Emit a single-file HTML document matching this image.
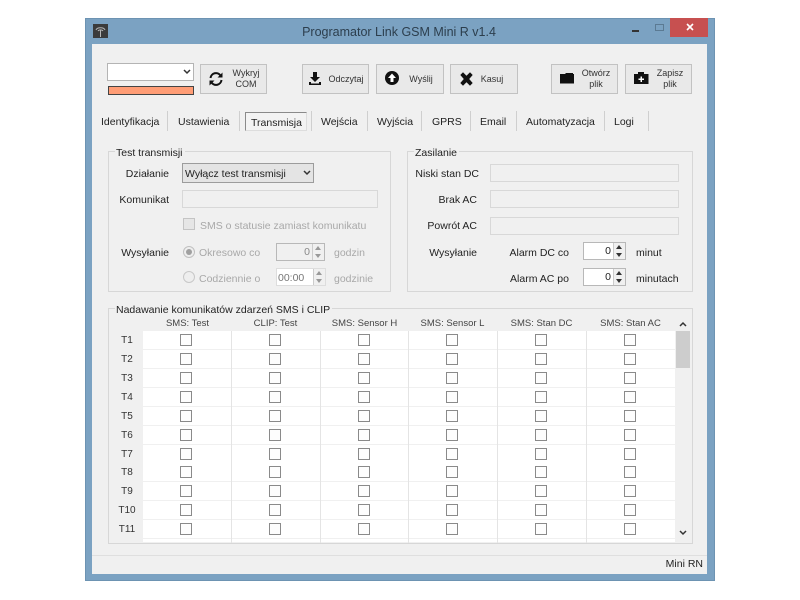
<!DOCTYPE html>
<html lang="pl"><head><meta charset="utf-8"><title>Programator Link GSM Mini R v1.4</title>
<style>
*{box-sizing:border-box}
html,body{margin:0;padding:0;background:#fff;width:800px;height:600px;overflow:hidden}
body{font-family:"Liberation Sans",sans-serif;font-size:10.5px;color:#222;position:relative}
.a,.t,.b,.f,.s,.c,.h,.v,.g{position:absolute}
#w{position:absolute;left:85px;top:18px;width:630px;height:563px;background:#7ba2c2;border:1px solid #6d93b2}
#in{position:absolute;left:92px;top:44px;width:615px;height:530px;background:#f0f0f0}
.t{white-space:nowrap;line-height:13px;margin-top:1px}
.r{text-align:right}.d{color:#a8a8a8}
.b{background:#e9e9e9;border:1px solid #c2c2c2;text-align:center;line-height:11px;font-size:9px;color:#333}
.b span{position:absolute;white-space:nowrap;text-align:center}
.f{background:#f0f0f0;border:1px solid #d8d8d8;height:28px}
.tab{position:absolute;top:111px;width:1px;height:20px;background:#cfcfcf}
.g{border:1px solid #d7d7d7}
.gl{position:absolute;background:#f0f0f0;padding:0 2px 0 1px;line-height:13px;color:#222;white-space:nowrap;margin-top:1px}
.s{background:#fff;border:1px solid #b8b8b8;height:18px}
.sd{background:#f0f0f0}
.ar{position:absolute;right:0;top:0;width:12px;height:100%;border-left:1px solid #ccc;background:#f0f0f0}
.ar:before,.ar:after{content:"";position:absolute;left:2px;border:3px solid transparent}
.ar:before{top:-1px;border-bottom:4px solid #333}
.ar:after{bottom:-1px;border-top:4px solid #333}
.dis:before{border-bottom-color:#999}.dis:after{border-top-color:#999}
.hd{position:absolute;top:318px;width:89px;text-align:center;font-size:9.5px;color:#444;line-height:12px;white-space:nowrap}
.row{position:absolute;left:143px;width:532px;height:18px;background:#fff}
.row i{position:absolute;top:3px;width:12px;height:12px;background:#fdfdfd;border:1px solid #8a8a8a}
.row i:nth-child(1){left:37px}.row i:nth-child(2){left:126px}.row i:nth-child(3){left:215px}.row i:nth-child(4){left:303px}.row i:nth-child(5){left:392px}.row i:nth-child(6){left:481px}
.v{top:331px;width:1px;height:212px;background:#e4e4e4}
.rl{position:absolute;left:111px;width:32px;text-align:center;font-size:10px;color:#333;line-height:12px;margin-top:1px}
</style></head><body>
<div id="w"></div>
<div id="in"></div>

<!-- title bar -->
<div class="a" style="left:93px;top:24px;width:15px;height:14px;background:#3b3b3b"></div>
<svg class="a" style="left:93px;top:24px" width="15" height="14" viewBox="0 0 15 14"><path d="M7.500 13V6M3 6C4 3 11 3 12 6M5 7c1-1.500 4-1.500 5 0" stroke="#b5b5b5" fill="none"/></svg>
<div class="t" style="left:199px;top:23px;width:400px;text-align:center;font-size:12.500px;line-height:16px;color:#2c3e4d">Programator Link GSM Mini R v1.4</div>
<div class="a" style="left:632px;top:30px;width:7px;height:2px;background:#333"></div>
<div class="a" style="left:655px;top:24px;width:9px;height:7px;border:1px solid #5b7a93"></div>
<div class="a" style="left:670px;top:18px;width:38px;height:19px;background:#c75050"></div>
<svg class="a" style="left:686px;top:23px" width="8" height="8" viewBox="0 0 8 8"><path d="M1 1L7 7M7 1L1 7" stroke="#fff" stroke-width="1.600"/></svg>

<!-- COM combobox -->
<div class="a" style="left:107px;top:63px;width:87px;height:18px;background:#fff;border:1px solid #b4b4b4"></div>
<svg class="a" style="left:183px;top:69px" width="8" height="6" viewBox="0 0 8 6"><path d="M1 1L4 4L7 1" stroke="#333" stroke-width="1.500" fill="none"/></svg>
<div class="a" style="left:108px;top:86px;width:86px;height:9px;background:#ff9d76;border:1px solid #444"></div>

<!-- buttons -->
<div class="b" style="left:200px;top:64px;width:67px;height:30px"><span style="left:27px;top:3px;width:36px">Wykryj</span><span style="left:27px;top:14px;width:36px">COM</span></div>
<svg class="a" style="left:208px;top:71px" width="16" height="16" viewBox="0 0 16 16"><path d="M2.500 7A5.500 5.500 0 0 1 12.500 4.500M13.500 9A5.500 5.500 0 0 1 3.500 11.500" stroke="#111" stroke-width="2" fill="none"/><path d="M14.500 1.500V6.500H9.500ZM1.500 14.500V9.500H6.500Z" fill="#111"/></svg>

<div class="b" style="left:302px;top:64px;width:67px;height:30px"><span style="left:21px;top:9px;width:44px">Odczytaj</span></div>
<svg class="a" style="left:308px;top:71px" width="14" height="14" viewBox="0 0 14 14"><path d="M5 1H9V6H12L7 11L2 6H5ZM1 11H3V12.500H11V11H13V14H1Z" fill="#111"/></svg>

<div class="b" style="left:376px;top:64px;width:68px;height:30px"><span style="left:29px;top:9px;width:30px">Wyślij</span></div>
<svg class="a" style="left:385px;top:71px" width="14" height="14" viewBox="0 0 14 14"><circle cx="7" cy="7" r="7" fill="#111"/><path d="M7 2.500L11 7H8.500V11H5.500V7H3Z" fill="#fff"/></svg>

<div class="b" style="left:450px;top:64px;width:68px;height:30px"><span style="left:26px;top:9px;width:30px">Kasuj</span></div>
<svg class="a" style="left:459px;top:72px" width="15" height="14" viewBox="0 0 15 14"><path d="M2 3L4 1L7.500 4.500L11 1L13 3L9.500 7L13 11L11 13L7.500 9.500L4 13L2 11L5.500 7Z" fill="#111" stroke="#111"/></svg>

<div class="b" style="left:551px;top:64px;width:67px;height:30px"><span style="left:26px;top:3px;width:36px">Otwórz</span><span style="left:26px;top:14px;width:36px">plik</span></div>
<svg class="a" style="left:560px;top:72px" width="14" height="12" viewBox="0 0 14 12"><path d="M0 2H5L6 1H13V2H14V11.500H0Z" fill="#111"/></svg>

<div class="b" style="left:625px;top:64px;width:67px;height:30px"><span style="left:26px;top:3px;width:36px">Zapisz</span><span style="left:26px;top:14px;width:36px">plik</span></div>
<svg class="a" style="left:634px;top:71px" width="15" height="13" viewBox="0 0 15 13"><path d="M0 3H4V1H10V3H14.500V13H0Z" fill="#111"/><path d="M6.500 5.500H8V7.500H10V9H8V11H6.500V9H4.500V7.500H6.500Z" fill="#fff"/></svg>

<!-- tabs -->
<div class="t" style="left:101px;top:115px">Identyfikacja</div>
<div class="tab" style="left:167px"></div>
<div class="t" style="left:178px;top:115px">Ustawienia</div>
<div class="tab" style="left:239px"></div>
<div class="a" style="left:245px;top:112px;width:62px;height:19px;background:#f3f3f3;border:1px solid #8a8a8a;border-right-color:#ddd;border-bottom-color:#ddd"></div>
<div class="t" style="left:251px;top:116px">Transmisja</div>
<div class="tab" style="left:311px"></div>
<div class="t" style="left:321px;top:115px">Wejścia</div>
<div class="tab" style="left:367px"></div>
<div class="t" style="left:377px;top:115px">Wyjścia</div>
<div class="tab" style="left:421px"></div>
<div class="t" style="left:432px;top:115px">GPRS</div>
<div class="tab" style="left:470px"></div>
<div class="t" style="left:480px;top:115px">Email</div>
<div class="tab" style="left:516px"></div>
<div class="t" style="left:526px;top:115px">Automatyzacja</div>
<div class="tab" style="left:604px"></div>
<div class="t" style="left:614px;top:115px">Logi</div>
<div class="tab" style="left:648px"></div>

<!-- Test transmisji -->
<div class="g" style="left:108px;top:151px;width:283px;height:141px"></div>
<div class="gl" style="left:115px;top:146px">Test transmisji</div>
<div class="t r" style="left:110px;top:167px;width:59px">Działanie</div>
<div class="a" style="left:182px;top:163px;width:132px;height:20px;background:#e4e4e4;border:1px solid #9c9c9c"></div>
<div class="t" style="left:185px;top:167px">Wyłącz test transmisji</div>
<svg class="a" style="left:303px;top:170px" width="8" height="6" viewBox="0 0 8 6"><path d="M1 1L4 4L7 1" stroke="#333" stroke-width="1.500" fill="none"/></svg>
<div class="t r" style="left:110px;top:193px;width:59px">Komunikat</div>
<div class="f" style="left:182px;top:190px;width:196px;height:18px"></div>
<div class="a" style="left:183px;top:218px;width:12px;height:12px;background:#e6e6e6;border:1px solid #c4c4c4"></div>
<div class="t d" style="left:200px;top:219px">SMS o statusie zamiast komunikatu</div>
<div class="t r" style="left:110px;top:246px;width:59px">Wysyłanie</div>
<div class="a" style="left:183px;top:246px;width:12px;height:12px;border-radius:50%;background:#eee;border:1px solid #c0c0c0"></div>
<div class="a" style="left:186px;top:249px;width:6px;height:6px;border-radius:50%;background:#a0a0a0"></div>
<div class="t d" style="left:199px;top:246px">Okresowo co</div>
<div class="s sd" style="left:276px;top:243px;width:49px"><div class="ar dis"></div></div>
<div class="t r" style="left:276px;top:245px;width:34px;color:#888">0</div>
<div class="t d" style="left:334px;top:246px">godzin</div>
<div class="a" style="left:183px;top:271px;width:12px;height:12px;border-radius:50%;background:#eee;border:1px solid #c8c8c8"></div>
<div class="t d" style="left:199px;top:272px">Codziennie o</div>
<div class="s" style="left:276px;top:268px;width:50px;border-color:#ddd"><div class="ar dis"></div></div>
<div class="t" style="left:278px;top:271px;color:#777">00:00</div>
<div class="t d" style="left:334px;top:272px">godzinie</div>

<!-- Zasilanie -->
<div class="g" style="left:407px;top:151px;width:286px;height:141px"></div>
<div class="gl" style="left:414px;top:146px">Zasilanie</div>
<div class="t r" style="left:409px;top:167px;width:70px">Niski stan DC</div>
<div class="f" style="left:490px;top:164px;width:189px;height:18px"></div>
<div class="t r" style="left:409px;top:193px;width:68px">Brak AC</div>
<div class="f" style="left:490px;top:190px;width:189px;height:18px"></div>
<div class="t r" style="left:409px;top:219px;width:68px">Powrót AC</div>
<div class="f" style="left:490px;top:217px;width:189px;height:18px"></div>
<div class="t r" style="left:409px;top:246px;width:68px">Wysyłanie</div>
<div class="t r" style="left:490px;top:246px;width:79px">Alarm DC co</div>
<div class="s" style="left:583px;top:242px;width:43px"><div class="ar"></div></div>
<div class="t r" style="left:583px;top:244px;width:28px">0</div>
<div class="t" style="left:636px;top:246px">minut</div>
<div class="t r" style="left:490px;top:272px;width:79px">Alarm AC po</div>
<div class="s" style="left:583px;top:268px;width:43px"><div class="ar"></div></div>
<div class="t r" style="left:583px;top:270px;width:28px">0</div>
<div class="t" style="left:636px;top:272px">minutach</div>

<!-- grid -->
<div class="g" style="left:108px;top:308px;width:585px;height:236px"></div>
<div class="gl" style="left:115px;top:303px">Nadawanie komunikatów zdarzeń SMS i CLIP</div>
<div class="hd" style="left:143px">SMS: Test</div>
<div class="hd" style="left:231px">CLIP: Test</div>
<div class="hd" style="left:320px">SMS: Sensor H</div>
<div class="hd" style="left:408px">SMS: Sensor L</div>
<div class="hd" style="left:497px">SMS: Stan DC</div>
<div class="hd" style="left:586px">SMS: Stan AC</div>

<div class="row" style="top:331px"><i></i><i></i><i></i><i></i><i></i><i></i></div>
<div class="row" style="top:350px"><i></i><i></i><i></i><i></i><i></i><i></i></div>
<div class="row" style="top:369px"><i></i><i></i><i></i><i></i><i></i><i></i></div>
<div class="row" style="top:388px"><i></i><i></i><i></i><i></i><i></i><i></i></div>
<div class="row" style="top:407px"><i></i><i></i><i></i><i></i><i></i><i></i></div>
<div class="row" style="top:426px"><i></i><i></i><i></i><i></i><i></i><i></i></div>
<div class="row" style="top:445px"><i></i><i></i><i></i><i></i><i></i><i></i></div>
<div class="row" style="top:463px"><i></i><i></i><i></i><i></i><i></i><i></i></div>
<div class="row" style="top:482px"><i></i><i></i><i></i><i></i><i></i><i></i></div>
<div class="row" style="top:501px"><i></i><i></i><i></i><i></i><i></i><i></i></div>
<div class="row" style="top:520px"><i></i><i></i><i></i><i></i><i></i><i></i></div>
<div class="row" style="top:539px;height:3px"></div>

<div class="v" style="left:231px"></div><div class="v" style="left:320px"></div><div class="v" style="left:408px"></div><div class="v" style="left:497px"></div><div class="v" style="left:586px"></div>

<div class="rl" style="top:334px">T1</div>
<div class="rl" style="top:353px">T2</div>
<div class="rl" style="top:372px">T3</div>
<div class="rl" style="top:391px">T4</div>
<div class="rl" style="top:410px">T5</div>
<div class="rl" style="top:429px">T6</div>
<div class="rl" style="top:448px">T7</div>
<div class="rl" style="top:466px">T8</div>
<div class="rl" style="top:485px">T9</div>
<div class="rl" style="top:504px">T10</div>
<div class="rl" style="top:523px">T11</div>

<!-- scrollbar -->
<div class="a" style="left:676px;top:331px;width:14px;height:37px;background:#cdcdcd"></div>
<svg class="a" style="left:679px;top:321px" width="8" height="6" viewBox="0 0 8 6"><path d="M1 5L4 2L7 5" stroke="#333" stroke-width="1.500" fill="none"/></svg>
<svg class="a" style="left:679px;top:530px" width="8" height="6" viewBox="0 0 8 6"><path d="M1 1L4 4L7 1" stroke="#333" stroke-width="1.500" fill="none"/></svg>

<!-- status bar -->
<div class="a" style="left:92px;top:555px;width:615px;height:1px;background:#dfdfdf"></div>
<div class="t r" style="left:600px;top:557px;width:103px;color:#222">Mini RN</div>
</body></html>
